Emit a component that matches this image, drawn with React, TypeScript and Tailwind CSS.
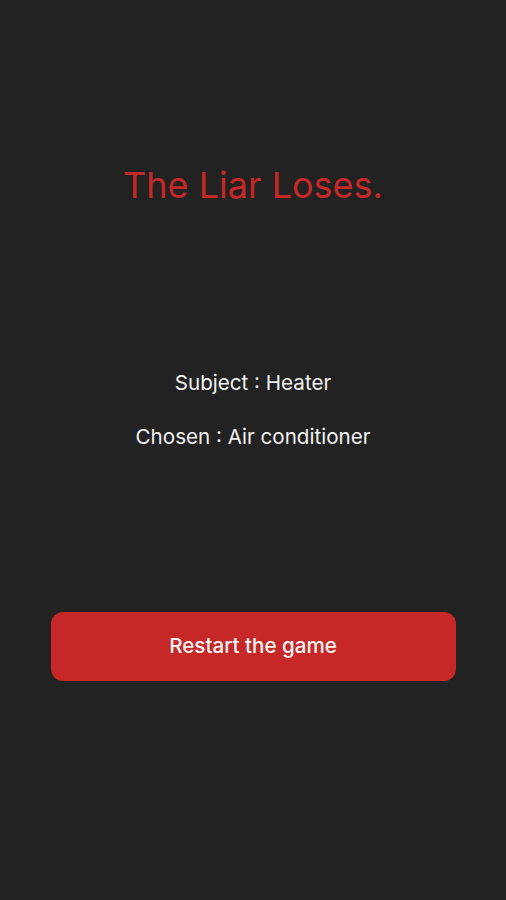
import React from 'react';

const App: React.FC = () => {
  return (
    <div
      className="min-h-screen w-full bg-[#222222] flex flex-col items-center"
      style={{ fontFamily: 'Inter, "Noto Sans", sans-serif' }}
    >
      <h1 className="mt-[163px] text-[36px] leading-[44px] font-normal text-[#c62828]">
        The Liar Loses.
      </h1>
      <div className="mt-[164px] flex flex-col items-center gap-[30px] text-[20.6px] leading-[24px] text-[#f2f2f2]">
        <p>Subject : Heater</p>
        <p>Chosen : Air conditioner</p>
      </div>
      <button className="mt-[163px] w-[405px] h-[69px] rounded-[12px] bg-[#c62828] text-[20.6px] text-[#f5f5f5] font-medium">
        Restart the game
      </button>
    </div>
  );
};

export default App;
